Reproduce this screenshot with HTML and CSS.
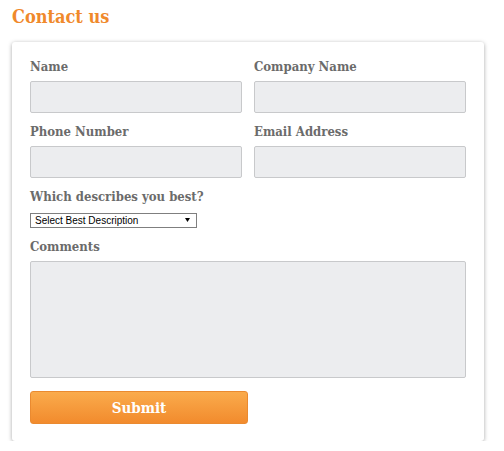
FILE: index.html
```html
<!DOCTYPE html>
<html>
<head>
<meta charset="utf-8">
<link rel="stylesheet" href="styles.css">
</head>
<body>
<h1 class="title">Contact us</h1>
<form class="card">
  <div class="grid">
    <div class="field">
      <label class="label">Name</label>
      <input class="input" type="text">
    </div>
    <div class="field">
      <label class="label">Company Name</label>
      <input class="input" type="text">
    </div>
    <div class="field">
      <label class="label">Phone Number</label>
      <input class="input" type="text">
    </div>
    <div class="field">
      <label class="label">Email Address</label>
      <input class="input" type="text">
    </div>
  </div>
  <div class="field field-select">
    <label class="label">Which describes you best?</label>
    <div class="select-wrap">
      <select class="select">
        <option>Select Best Description</option>
      </select>
      <svg class="arrow" width="5" height="4" viewBox="0 0 5 4"><polygon points="0,0 5,0 2.5,4" fill="#000"/></svg>
    </div>
  </div>
  <div class="field field-comments">
    <label class="label">Comments</label>
    <textarea class="input textarea"></textarea>
  </div>
  <button class="submit" type="button">Submit</button>
</form>
</body>
</html>
```
FILE: styles.css
```css
html, body {
  margin: 0;
  padding: 0;
  background: #ffffff;
}
body {
  font-family: "DejaVu Serif Condensed", "DejaVu Serif", serif;
  font-stretch: condensed;
  line-height: 16px;
}
.title {
  margin: 5px 0 13px 12px;
  font-size: 18px;
  line-height: 24px;
  font-weight: bold;
  color: #f0892b;
}
.card {
  box-sizing: border-box;
  width: 472px;
  margin: 0 0 0 12px;
  padding: 17px 18px 17px 18px;
  background: #fff;
  border-radius: 3px;
  box-shadow: 0 1px 4px rgba(0, 0, 0, 0.35);
  display: flex;
  flex-direction: column;
}
.grid {
  display: grid;
  grid-template-columns: 212px 212px;
  column-gap: 12px;
  row-gap: 11px;
}
.field {
  display: flex;
  flex-direction: column;
}
.label {
  font-size: 13px;
  line-height: 16px;
  font-weight: bold;
  color: #6b6b6b;
  margin-bottom: 6px;
}
.input {
  display: block;
  box-sizing: border-box;
  height: 32px;
  margin: 0;
  background: #ecedef;
  border: 1px solid #c8c9cb;
  border-radius: 2px;
  font: inherit;
}
.field-select {
  margin-top: 11px;
}
.field-select .label {
  margin-bottom: 8px;
}
.select-wrap {
  position: relative;
  width: 167px;
  height: 15px;
}
.select {
  display: block;
  box-sizing: border-box;
  appearance: none;
  -webkit-appearance: none;
  width: 167px;
  height: 15px;
  margin: 0;
  padding: 0 0 0 4px;
  border: 1px solid #7f7f7f;
  border-radius: 0;
  background: #fff;
  font-family: "Liberation Sans", Arial, sans-serif;
  font-stretch: normal;
  font-size: 10px;
  line-height: 13px;
  color: #000;
}
.arrow {
  position: absolute;
  left: 155px;
  top: 5px;
  display: block;
  pointer-events: none;
}
.field-comments {
  margin-top: 11px;
}
.field-comments .label {
  margin-bottom: 6px;
}
.textarea {
  height: 117px;
  resize: none;
  width: 100%;
}
.submit {
  display: block;
  box-sizing: border-box;
  margin-top: 13px;
  width: 218px;
  height: 33px;
  border: 1px solid #ea8a30;
  border-radius: 3px;
  background: linear-gradient(#faab4c, #f28b2d);
  color: #fff;
  font-family: "DejaVu Serif Condensed", "DejaVu Serif", serif;
  font-stretch: condensed;
  font-weight: bold;
  font-size: 15px;
  line-height: 16px;
  padding: 0;
}
```
